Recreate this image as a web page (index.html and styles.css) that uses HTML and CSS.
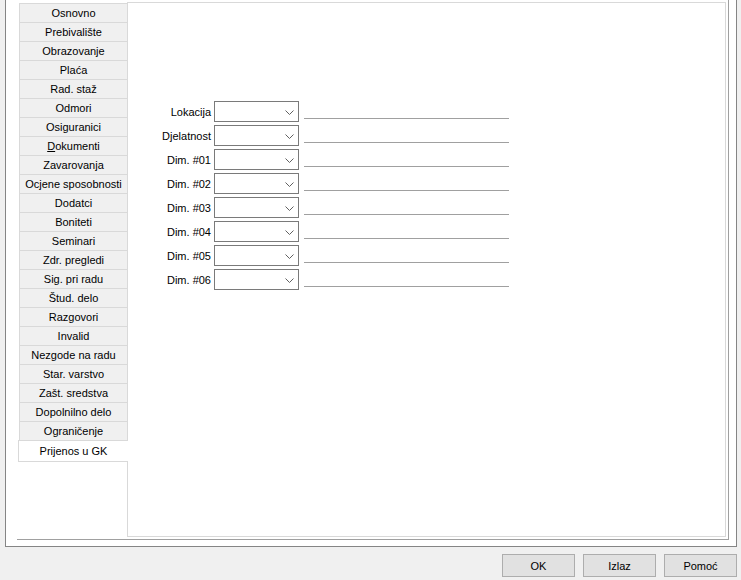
FILE: index.html
```html
<!DOCTYPE html>
<html>
<head>
<meta charset="utf-8">
<link rel="stylesheet" href="styles.css">
</head>
<body>
<div class="frame">
  <div class="tabctl">
    <div class="tabs">
      <div class="tab">Osnovno</div>
      <div class="tab">Prebivalište</div>
      <div class="tab">Obrazovanje</div>
      <div class="tab">Plaća</div>
      <div class="tab">Rad. staž</div>
      <div class="tab">Odmori</div>
      <div class="tab">Osiguranici</div>
      <div class="tab"><span class="u">D</span>okumenti</div>
      <div class="tab">Zavarovanja</div>
      <div class="tab">Ocjene sposobnosti</div>
      <div class="tab">Dodatci</div>
      <div class="tab">Boniteti</div>
      <div class="tab">Seminari</div>
      <div class="tab">Zdr. pregledi</div>
      <div class="tab">Sig. pri radu</div>
      <div class="tab">Štud. delo</div>
      <div class="tab">Razgovori</div>
      <div class="tab">Invalid</div>
      <div class="tab">Nezgode na radu</div>
      <div class="tab">Star. varstvo</div>
      <div class="tab">Zašt. sredstva</div>
      <div class="tab">Dopolnilno delo</div>
      <div class="tab">Ograničenje</div>
      <div class="tab sel">Prijenos u GK</div>
    </div>
    <div class="page">
      <div class="form">
        <div class="lbl">Lokacija</div><div class="combo"><svg class="chev" width="9" height="5" viewBox="0 0 9 5"><path d="M0.5 0.5 L4.5 4.5 L8.5 0.5" fill="none" stroke="#606060" stroke-width="1"/></svg></div><div class="line"></div>
        <div class="lbl">Djelatnost</div><div class="combo"><svg class="chev" width="9" height="5" viewBox="0 0 9 5"><path d="M0.5 0.5 L4.5 4.5 L8.5 0.5" fill="none" stroke="#606060" stroke-width="1"/></svg></div><div class="line"></div>
        <div class="lbl">Dim. #01</div><div class="combo"><svg class="chev" width="9" height="5" viewBox="0 0 9 5"><path d="M0.5 0.5 L4.5 4.5 L8.5 0.5" fill="none" stroke="#606060" stroke-width="1"/></svg></div><div class="line"></div>
        <div class="lbl">Dim. #02</div><div class="combo"><svg class="chev" width="9" height="5" viewBox="0 0 9 5"><path d="M0.5 0.5 L4.5 4.5 L8.5 0.5" fill="none" stroke="#606060" stroke-width="1"/></svg></div><div class="line"></div>
        <div class="lbl">Dim. #03</div><div class="combo"><svg class="chev" width="9" height="5" viewBox="0 0 9 5"><path d="M0.5 0.5 L4.5 4.5 L8.5 0.5" fill="none" stroke="#606060" stroke-width="1"/></svg></div><div class="line"></div>
        <div class="lbl">Dim. #04</div><div class="combo"><svg class="chev" width="9" height="5" viewBox="0 0 9 5"><path d="M0.5 0.5 L4.5 4.5 L8.5 0.5" fill="none" stroke="#606060" stroke-width="1"/></svg></div><div class="line"></div>
        <div class="lbl">Dim. #05</div><div class="combo"><svg class="chev" width="9" height="5" viewBox="0 0 9 5"><path d="M0.5 0.5 L4.5 4.5 L8.5 0.5" fill="none" stroke="#606060" stroke-width="1"/></svg></div><div class="line"></div>
        <div class="lbl">Dim. #06</div><div class="combo"><svg class="chev" width="9" height="5" viewBox="0 0 9 5"><path d="M0.5 0.5 L4.5 4.5 L8.5 0.5" fill="none" stroke="#606060" stroke-width="1"/></svg></div><div class="line"></div>
      </div>
    </div>
  </div>
</div>
<div class="footer">
  <div class="btn">OK</div>
  <div class="btn">Izlaz</div>
  <div class="btn">Pomoć</div>
</div>
</body>
</html>
```
FILE: styles.css
```css
html, body {
  margin: 0;
  padding: 0;
}
body {
  background: #f0f0f0;
  font-family: "Liberation Sans", Arial, sans-serif;
  font-size: 11px;
  color: #000;
  width: 741px;
  height: 580px;
  overflow: hidden;
}
.frame {
  margin-left: 5px;
  width: 732px;
  box-sizing: border-box;
  height: 547px;
  background: #fff;
  border-left: 1px solid #858585;
  border-right: 1px solid #858585;
  border-bottom: 1px solid #858585;
  padding-left: 11px;
}
.tabctl {
  width: 712px;
  height: 540px;
  box-sizing: border-box;
  border-right: 1px solid #a0a0a0;
  border-bottom: 1px solid #a0a0a0;
  padding: 2px 2px 2px 1px;
  display: flex;
}
.tabs {
  width: 109px;
  flex: none;
  padding-top: 1px;
  display: flex;
  flex-direction: column;
}
.tab {
  margin-left: 1px;
  height: 19px;
  box-sizing: border-box;
  border-top: 1px solid #d9d9d9;
  border-left: 1px solid #d9d9d9;
  background: #f0f0f0;
  display: flex;
  align-items: center;
  justify-content: center;
  white-space: nowrap;
}
.tab .u {
  text-decoration: underline;
}
.tab.sel {
  margin-left: 0;
  margin-right: -1px;
  height: 22px;
  background: #fff;
  border-bottom: 1px solid #d9d9d9;
  position: relative;
  z-index: 1;
}
.page {
  width: 599px;
  height: 535px;
  box-sizing: border-box;
  border: 1px solid #d9d9d9;
  flex: none;
}
.form {
  margin-top: 98px;
  display: grid;
  grid-template-columns: 86px 85px 210px;
  grid-auto-rows: 21px;
  row-gap: 3px;
}
.lbl {
  text-align: right;
  padding-right: 3px;
  align-self: center;
  white-space: nowrap;
}
.combo {
  border: 1px solid #7a7a7a;
  background: #fff;
  display: flex;
  align-items: center;
  justify-content: flex-end;
  padding-right: 4px;
  padding-top: 1px;
}
.chev {
  display: block;
}
.line {
  margin-left: 5px;
  height: 18px;
  box-sizing: border-box;
  border-bottom: 1px solid #a0a0a0;
}
.footer {
  display: flex;
  justify-content: flex-end;
  gap: 8px;
  padding-right: 4px;
  margin-top: 7px;
}
.btn {
  width: 73px;
  height: 23px;
  box-sizing: border-box;
  background: #e1e1e1;
  border: 1px solid #adadad;
  display: flex;
  align-items: center;
  justify-content: center;
}
```
